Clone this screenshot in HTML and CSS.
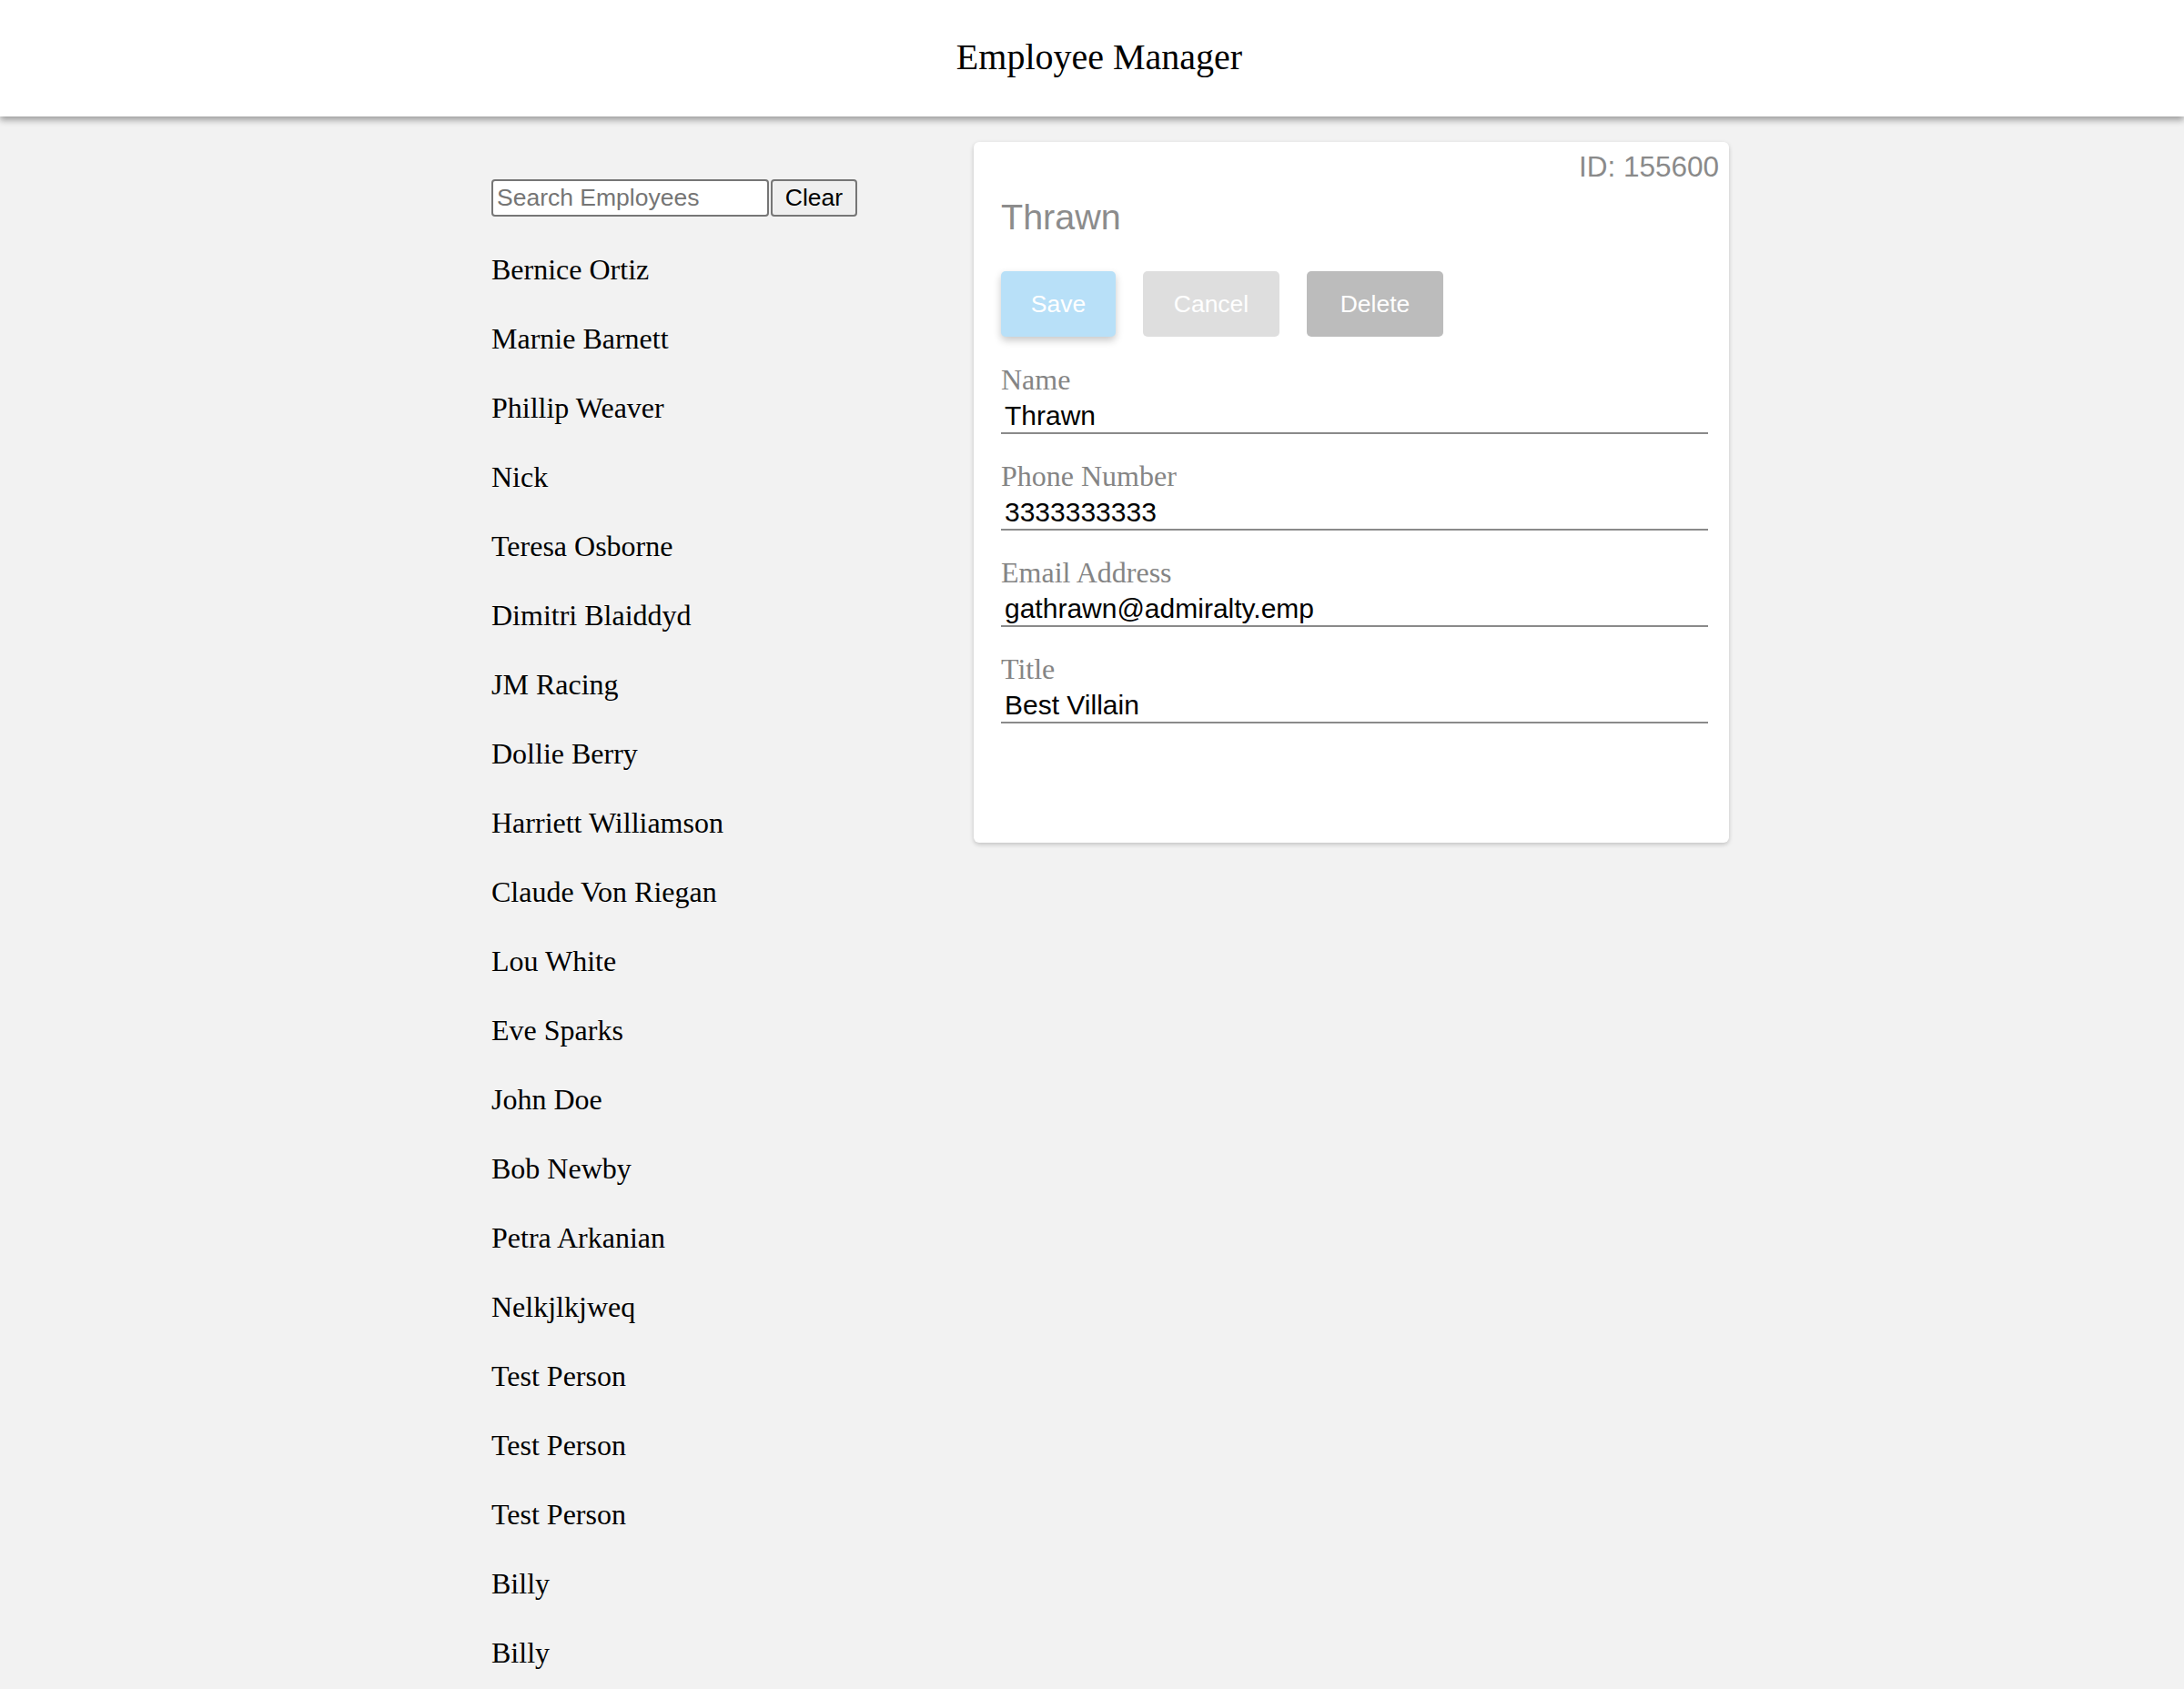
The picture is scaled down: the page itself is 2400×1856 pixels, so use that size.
FILE: index.html
```html
<!DOCTYPE html>
<html lang="en">
<head>
<meta charset="utf-8">
<title>Employee Manager</title>
<link rel="stylesheet" href="styles.css">
</head>
<body>
<header class="app-header">
  <h1 class="app-title">Employee Manager</h1>
</header>
<main class="layout">
  <section class="sidebar">
    <div class="search-row">
      <input class="search-input" type="text" placeholder="Search Employees">
      <button class="clear-btn" type="button">Clear</button>
    </div>
    <ul class="employee-list">
      <li>Bernice Ortiz</li>
      <li>Marnie Barnett</li>
      <li>Phillip Weaver</li>
      <li>Nick</li>
      <li>Teresa Osborne</li>
      <li>Dimitri Blaiddyd</li>
      <li>JM Racing</li>
      <li>Dollie Berry</li>
      <li>Harriett Williamson</li>
      <li>Claude Von Riegan</li>
      <li>Lou White</li>
      <li>Eve Sparks</li>
      <li>John Doe</li>
      <li>Bob Newby</li>
      <li>Petra Arkanian</li>
      <li>Nelkjlkjweq</li>
      <li>Test Person</li>
      <li>Test Person</li>
      <li>Test Person</li>
      <li>Billy</li>
      <li>Billy</li>
    </ul>
  </section>
  <section class="card">
    <div class="card-id">ID: 155600</div>
    <h2 class="card-name">Thrawn</h2>
    <div class="actions">
      <button class="btn btn-save" type="button">Save</button>
      <button class="btn btn-cancel" type="button">Cancel</button>
      <button class="btn btn-delete" type="button">Delete</button>
    </div>
    <div class="fields">
      <div class="field">
        <label class="field-label">Name</label>
        <input class="field-input" type="text" value="Thrawn">
      </div>
      <div class="field">
        <label class="field-label">Phone Number</label>
        <input class="field-input" type="text" value="3333333333">
      </div>
      <div class="field">
        <label class="field-label">Email Address</label>
        <input class="field-input" type="text" value="gathrawn@admiralty.emp">
      </div>
      <div class="field">
        <label class="field-label">Title</label>
        <input class="field-input" type="text" value="Best Villain">
      </div>
    </div>
  </section>
</main>
</body>
</html>
```
FILE: styles.css
```css
* {
  box-sizing: border-box;
}

html, body {
  margin: 0;
  padding: 0;
}

body {
  background: #f2f2f2;
  font-family: "Liberation Serif", "Times New Roman", serif;
  color: #000;
}

.app-header {
  position: relative;
  z-index: 2;
  background: #fff;
  height: 128px;
  padding: 40px 0 0 16px;
  box-shadow: 0 4px 7px rgba(0, 0, 0, 0.35);
  text-align: center;
}

.app-title {
  margin: 0;
  font-family: "Liberation Serif", "Times New Roman", serif;
  font-weight: normal;
  font-size: 40px;
  line-height: 46px;
}

.layout {
  display: flex;
  align-items: flex-start;
  padding: 28px 0 0 540px;
}

.sidebar {
  width: 530px;
  padding-top: 41px;
}

.search-row {
  display: flex;
  align-items: stretch;
  gap: 2px;
  height: 41px;
}

.search-input {
  width: 305px;
  height: 41px;
  margin: 0;
  padding: 2px 4px;
  border: 2px solid #767676;
  border-radius: 4px;
  background: #fff;
  font-family: "Liberation Sans", Arial, sans-serif;
  font-size: 26.5px;
  color: #000;
}

.search-input::placeholder {
  color: #757575;
}

.clear-btn {
  width: 95px;
  height: 41px;
  margin: 0;
  padding: 0;
  border: 2px solid #767676;
  border-radius: 4px;
  background: #efefef;
  font-family: "Liberation Sans", Arial, sans-serif;
  font-size: 26.5px;
  color: #000;
}

.employee-list {
  list-style: none;
  margin: 40px 0 0;
  padding: 0;
  display: flex;
  flex-direction: column;
  gap: 40px;
}

.employee-list li {
  font-size: 32px;
  line-height: 36px;
  white-space: nowrap;
}

.card {
  width: 830px;
  background: #fff;
  border-radius: 6px;
  box-shadow: 0 2px 5px rgba(0, 0, 0, 0.2);
  padding: 9px 11px 131px 30px;
}

.card-id {
  text-align: right;
  font-family: "Liberation Sans", Arial, sans-serif;
  font-size: 31.5px;
  line-height: 37px;
  color: #8a8a8a;
}

.card-name {
  margin: 13px 0 0;
  font-family: "Liberation Sans", Arial, sans-serif;
  font-weight: normal;
  font-size: 39.5px;
  line-height: 46px;
  color: #8c8c8c;
}

.actions {
  display: flex;
  gap: 30px;
  margin-top: 37px;
}

.btn {
  height: 72px;
  padding: 0;
  border: none;
  border-radius: 5px;
  color: #fff;
  font-family: "Liberation Sans", Arial, sans-serif;
  font-size: 26.5px;
}

.btn-save {
  width: 126px;
  background: #b8e0f8;
  box-shadow: 0 4px 8px rgba(0, 0, 0, 0.22);
}

.btn-cancel {
  width: 150px;
  background: #dedede;
}

.btn-delete {
  width: 150px;
  background: #bcbcbc;
}

.fields {
  display: flex;
  flex-direction: column;
  gap: 28px;
  margin-top: 29px;
}

.field {
  display: flex;
  flex-direction: column;
}

.field-label {
  font-family: "Liberation Serif", "Times New Roman", serif;
  font-size: 32px;
  line-height: 36px;
  color: #858585;
  margin-bottom: 3px;
}

.field-input {
  width: 777px;
  height: 39px;
  margin: 0;
  padding: 2px 4px 1px;
  border: none;
  border-bottom: 2px solid #8a8a8a;
  border-radius: 0;
  background: transparent;
  font-family: "Liberation Sans", Arial, sans-serif;
  font-size: 30px;
  color: #000;
  outline: none;
}
```
